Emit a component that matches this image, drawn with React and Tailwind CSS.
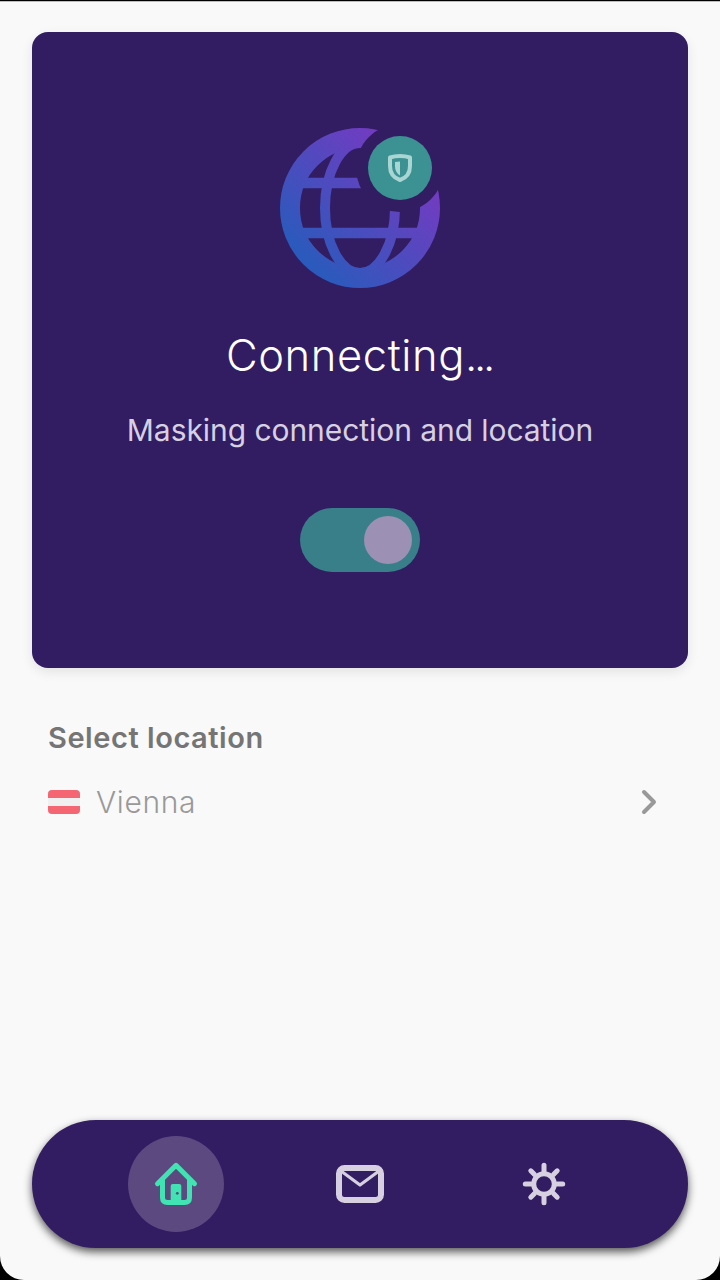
function Globe() {
  return (
    <svg viewBox="0 0 160 160" className="block size-40" aria-hidden="true">
      <defs>
        <linearGradient id="globeFill" gradientUnits="userSpaceOnUse" x1="30" y1="135" x2="130" y2="35">
          <stop offset="0" stopColor="#2b5abc" />
          <stop offset="1" stopColor="#733bc1" />
        </linearGradient>
        <mask id="globeMask" maskUnits="userSpaceOnUse" x="0" y="0" width="160" height="160">
          <g fill="none" stroke="white">
            <circle cx="80" cy="80" r="70" strokeWidth="20" />
            <ellipse cx="80" cy="80" rx="35" ry="65" strokeWidth="10" />
            <path d="M20 55H140M20 105H140" strokeWidth="10.6" />
          </g>
          <circle cx="120" cy="40" r="44" fill="black" />
        </mask>
      </defs>
      <rect width="160" height="160" fill="url(#globeFill)" mask="url(#globeMask)" />
      <circle cx="120" cy="40" r="32" fill="#3c9292" />
      <path
        d="M120 28C123.500 28 127 28.500 130 29.500V38C130 45 126 50 120 52C114 50 110 45 110 38V29.500C113 28.500 116.500 28 120 28Z"
        fill="none" stroke="#a9d5d3" strokeWidth="4" strokeLinejoin="round"
      />
      <path d="M120 33.500V47.500C116.500 45.500 115 42 115 38.500V34Z" fill="#a9d5d3" />
    </svg>
  );
}

function Home() {
  return (
    <svg viewBox="0 0 48 48" className="size-12" fill="none" stroke="#40e3b1" strokeWidth="5" strokeLinecap="round" strokeLinejoin="round">
      <path d="M5.500 23.700L24 5.300L42.500 23.700" />
      <path d="M10.500 20V37.500Q10.500 42.500 15.500 42.500H32.500Q37.500 42.500 37.500 37.500V20" />
      <path d="M18.700 42V26Q18.700 24 20.700 24H27.300Q29.300 24 29.300 26V42Z" fill="#40e3b1" stroke="none" />
      <circle cx="25.300" cy="33.300" r="1.400" fill="#5c4980" stroke="none" />
    </svg>
  );
}

function Mail() {
  return (
    <svg viewBox="0 0 48 48" className="size-12" fill="none" stroke="#d6d0e0">
      <rect x="3" y="8" width="42" height="32" rx="5.500" strokeWidth="6" />
      <path d="M5 11L24 25L43 11" strokeWidth="3.200" strokeLinejoin="round" />
    </svg>
  );
}

function Sun() {
  return (
    <svg viewBox="0 0 48 48" className="size-12" fill="none" stroke="#d6d0e0" strokeWidth="5" strokeLinecap="round">
      <circle cx="24" cy="24" r="10.300" />
      <path d="M24 11V5.300M24 37V42.700M11 24H5.300M37 24H42.700M14.500 14.500L10.800 10.800M33.500 14.500L37.200 10.800M14.500 33.500L10.800 37.200M33.500 33.500L37.200 37.200" />
    </svg>
  );
}

export default function App() {
  return (
    <div className="h-[1280px] w-[720px] bg-black pt-px font-['Inter',sans-serif]">
      <main className="flex h-[1279px] flex-col rounded-b-3xl border-t border-[#bdbdbd] bg-[#f9f9f9] px-8 pt-[30px] pb-8">
        <section className="flex h-[636px] flex-col items-center rounded-2xl bg-[#321c62] pt-24 shadow-[0_4px_12px_rgba(0,0,0,0.09)]">
          <Globe />
          <h1 className="mt-[39px] mr-[2px] h-14 whitespace-nowrap text-[43.5px] leading-[56px] font-[350] tracking-[0.6px] text-white">
            Connecting<span className="tracking-[-3.3px]">...</span>
          </h1>
          <p className="mt-[27px] h-10 whitespace-nowrap text-[30px] leading-10 tracking-[-0.06px] text-[#d6d0e0]">Masking connection and location</p>
          <button aria-label="Connection" className="mt-[58px] flex h-16 w-[120px] items-center justify-end rounded-full bg-[#387f8a] p-2">
            <span className="size-12 rounded-full bg-[#9c90b4]" />
          </button>
        </section>
        <section className="px-4 pt-[50px]">
          <h2 className="h-10 text-[29px] leading-10 font-semibold tracking-[0.55px] text-[#757575]">Select location</h2>
          <button className="mt-6 flex h-10 w-full items-center">
            <span className="flex h-6 w-8 flex-col overflow-hidden rounded bg-[#f0f0f0]">
              <span className="h-2 bg-[#f36672]" />
              <span className="mt-2 h-2 bg-[#f36672]" />
            </span>
            <span className="ml-4 text-[30px] leading-10 font-light tracking-[0.6px] text-[#999999]">Vienna</span>
            <svg viewBox="0 0 16 28" className="mr-[15px] ml-auto h-7 w-4" fill="none" stroke="#999" strokeWidth="4" strokeLinecap="round" strokeLinejoin="round">
              <path d="M3 4L13 14L3 24" />
            </svg>
          </button>
        </section>
        <nav className="mt-auto flex h-32 items-center justify-between rounded-full bg-[#321c62] px-24 shadow-[0_4px_8px_rgba(0,0,0,0.65)]">
          <button aria-label="Home" className="flex size-24 items-center justify-center rounded-full bg-[#5c4980]"><Home /></button>
          <button aria-label="Messages" className="flex size-24 items-center justify-center"><Mail /></button>
          <button aria-label="Settings" className="flex size-24 items-center justify-center"><Sun /></button>
        </nav>
      </main>
    </div>
  );
}
